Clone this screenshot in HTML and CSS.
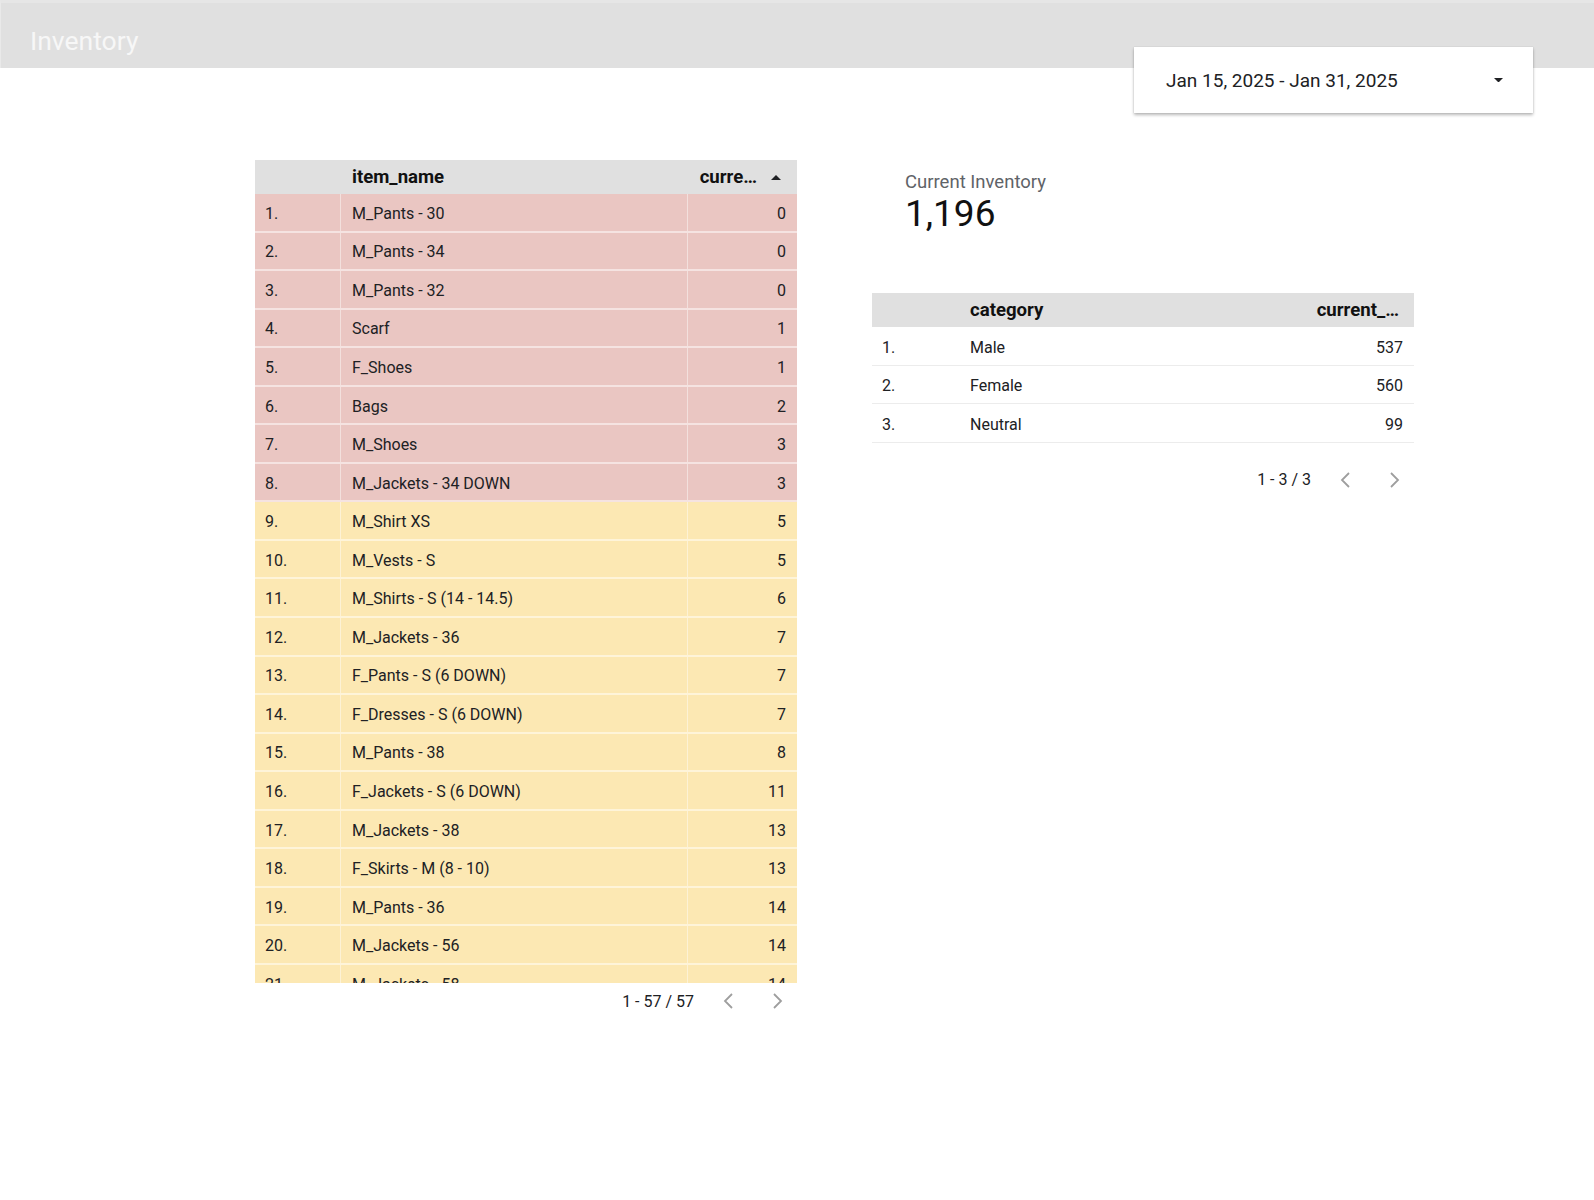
FILE: index.html
```html
<!DOCTYPE html>
<html>
<head>
<meta charset="utf-8">
<title>Inventory</title>
<link rel="stylesheet" href="styles.css">
</head>
<body>
<header class="topbar">
  <div class="title">Inventory</div>
</header>

<div class="daterange">
  <span class="daterange-text">Jan 15, 2025 - Jan 31, 2025</span>
  <svg class="dd-arrow" width="10" height="5" viewBox="0 0 10 5"><path d="M0 0 L10 0 L5 5 Z" fill="#202124"/></svg>
</div>

<main class="canvas">
  <section class="col-left">
    <div class="tbl tbl-items">
      <div class="row thead">
        <div class="c num"></div>
        <div class="c name">item_name</div>
        <div class="c val val-head"><span>curre…</span><svg class="sort" width="10" height="5" viewBox="0 0 10 5"><path d="M0 5 L10 5 L5 0 Z" fill="#202124"/></svg></div>
      </div>
      <div class="tbody">
        <div class="row red"><div class="c num">1.</div><div class="c name">M_Pants - 30</div><div class="c val">0</div></div>
        <div class="row red"><div class="c num">2.</div><div class="c name">M_Pants - 34</div><div class="c val">0</div></div>
        <div class="row red"><div class="c num">3.</div><div class="c name">M_Pants - 32</div><div class="c val">0</div></div>
        <div class="row red"><div class="c num">4.</div><div class="c name">Scarf</div><div class="c val">1</div></div>
        <div class="row red"><div class="c num">5.</div><div class="c name">F_Shoes</div><div class="c val">1</div></div>
        <div class="row red"><div class="c num">6.</div><div class="c name">Bags</div><div class="c val">2</div></div>
        <div class="row red"><div class="c num">7.</div><div class="c name">M_Shoes</div><div class="c val">3</div></div>
        <div class="row red"><div class="c num">8.</div><div class="c name">M_Jackets - 34 DOWN</div><div class="c val">3</div></div>
        <div class="row yel"><div class="c num">9.</div><div class="c name">M_Shirt XS</div><div class="c val">5</div></div>
        <div class="row yel"><div class="c num">10.</div><div class="c name">M_Vests - S</div><div class="c val">5</div></div>
        <div class="row yel"><div class="c num">11.</div><div class="c name">M_Shirts - S (14 - 14.5)</div><div class="c val">6</div></div>
        <div class="row yel"><div class="c num">12.</div><div class="c name">M_Jackets - 36</div><div class="c val">7</div></div>
        <div class="row yel"><div class="c num">13.</div><div class="c name">F_Pants - S (6 DOWN)</div><div class="c val">7</div></div>
        <div class="row yel"><div class="c num">14.</div><div class="c name">F_Dresses - S (6 DOWN)</div><div class="c val">7</div></div>
        <div class="row yel"><div class="c num">15.</div><div class="c name">M_Pants - 38</div><div class="c val">8</div></div>
        <div class="row yel"><div class="c num">16.</div><div class="c name">F_Jackets - S (6 DOWN)</div><div class="c val">11</div></div>
        <div class="row yel"><div class="c num">17.</div><div class="c name">M_Jackets - 38</div><div class="c val">13</div></div>
        <div class="row yel"><div class="c num">18.</div><div class="c name">F_Skirts - M (8 - 10)</div><div class="c val">13</div></div>
        <div class="row yel"><div class="c num">19.</div><div class="c name">M_Pants - 36</div><div class="c val">14</div></div>
        <div class="row yel"><div class="c num">20.</div><div class="c name">M_Jackets - 56</div><div class="c val">14</div></div>
        <div class="row yel"><div class="c num">21.</div><div class="c name">M_Jackets - 58</div><div class="c val">14</div></div>
      </div>
    </div>
    <div class="pager">
      <span class="pager-text">1 - 57 / 57</span>
      <svg class="chev" width="28" height="28" viewBox="0 0 28 28"><polyline points="17,7 10,14 17,21" fill="none" stroke="#9e9e9e" stroke-width="1.8"/></svg>
      <svg class="chev" width="28" height="28" viewBox="0 0 28 28"><polyline points="11,7 18,14 11,21" fill="none" stroke="#9e9e9e" stroke-width="1.8"/></svg>
    </div>
  </section>

  <section class="col-right">
    <div class="scorecard">
      <div class="sc-label">Current Inventory</div>
      <div class="sc-value">1,196</div>
    </div>
    <div class="tbl tbl-cat">
      <div class="row thead">
        <div class="c num"></div>
        <div class="c name">category</div>
        <div class="c val val-head2">current_…</div>
      </div>
      <div class="row plain"><div class="c num">1.</div><div class="c name">Male</div><div class="c val">537</div></div>
      <div class="row plain"><div class="c num">2.</div><div class="c name">Female</div><div class="c val">560</div></div>
      <div class="row plain"><div class="c num">3.</div><div class="c name">Neutral</div><div class="c val">99</div></div>
    </div>
    <div class="pager pager-cat">
      <span class="pager-text">1 - 3 / 3</span>
      <svg class="chev" width="28" height="28" viewBox="0 0 28 28"><polyline points="17,7 10,14 17,21" fill="none" stroke="#9e9e9e" stroke-width="1.8"/></svg>
      <svg class="chev" width="28" height="28" viewBox="0 0 28 28"><polyline points="11,7 18,14 11,21" fill="none" stroke="#9e9e9e" stroke-width="1.8"/></svg>
    </div>
  </section>
</main>
</body>
</html>
```

FILE: styles.css
```css
* { box-sizing: border-box; }

html, body {
  margin: 0;
  padding: 0;
  background: #ffffff;
}

body {
  font-family: Roboto, "Liberation Sans", Arial, sans-serif;
  color: #202124;
  width: 1594px;
  height: 1200px;
  overflow: hidden;
  position: relative;
}

.topbar {
  height: 68px;
  background: #e0e0e0;
  border-top: 3px solid #e6e6e6;
  border-left: 1px solid #e9e9e9;
}

.title {
  padding-left: 29px;
  padding-top: 23px;
  font-size: 26.5px;
  line-height: 30px;
  color: #f7f7f7;
  font-weight: 400;
}

.daterange {
  position: absolute;
  left: 1134px;
  top: 47px;
  width: 399px;
  height: 66px;
  background: #ffffff;
  box-shadow: 0 2px 3px rgba(0,0,0,0.28), 0 0 1px rgba(0,0,0,0.15);
  display: flex;
  align-items: center;
  padding-left: 32px;
  padding-right: 30px;
}

.daterange-text {
  font-size: 19px;
  color: #202124;
  flex: 1;
}

.dd-arrow { display: block; width: 9px; height: 4.5px; margin-top: 0; }

.canvas {
  display: flex;
  align-items: flex-start;
  padding-left: 255px;
  padding-top: 92px;
  gap: 75px;
}

.col-left { width: 542px; }
.col-right { width: 542px; }

.tbl { width: 542px; }

.row {
  display: grid;
  align-items: stretch;
}

.tbl-items .row { grid-template-columns: 86px 347px 109px; }
.tbl-cat .row { grid-template-columns: 87px 1fr 160px; }

.c {
  display: flex;
  align-items: center;
  font-size: 16px;
  color: #202124;
  white-space: nowrap;
  overflow: hidden;
  padding-top: 2px;
}

.c.num { padding-left: 10px; }
.c.name { padding-left: 11px; }
.c.val { justify-content: flex-end; padding-right: 11px; }

.thead {
  height: 34px;
  background: #e0e0e0;
}

.thead .c {
  font-weight: 700;
  font-size: 18.6px;
  color: #111;
  padding-top: 0;
}

.val-head { padding-right: 16px !important; gap: 14px; }
.sort { display: block; width: 10px; height: 5px; }

.val-head2 { padding-right: 15px !important; }

.tbody {
  height: 789px;
  overflow: hidden;
}

.tbody .row {
  height: 38.55px;
  border-bottom: 2px solid rgba(255,255,255,0.5);
}

.tbody .row .c.num,
.tbody .row .c.name {
  border-right: 1px solid rgba(255,255,255,0.45);
}

.row.red { background: #eac6c2; }
.row.yel { background: #fce8b3; }

.row.plain {
  height: 38.6px;
  border-bottom: 1px solid #ececec;
  padding-top: 1px;
}

.pager {
  display: flex;
  justify-content: flex-end;
  align-items: center;
  height: 36px;
  padding-right: 6px;
  gap: 20px;
}

.pager-text {
  font-size: 16px;
  color: #202124;
  margin-right: 1px;
}

.chev { display: block; }

.pager-cat { margin-top: 19px; }

.scorecard {
  padding-left: 33px;
  padding-top: 11px;
  height: 133px;
}

.sc-label {
  font-size: 18.5px;
  line-height: 22px;
  color: #5f6368;
}

.sc-value {
  font-size: 37px;
  line-height: 40px;
  color: #111;
  margin-top: 1px;
}
```
